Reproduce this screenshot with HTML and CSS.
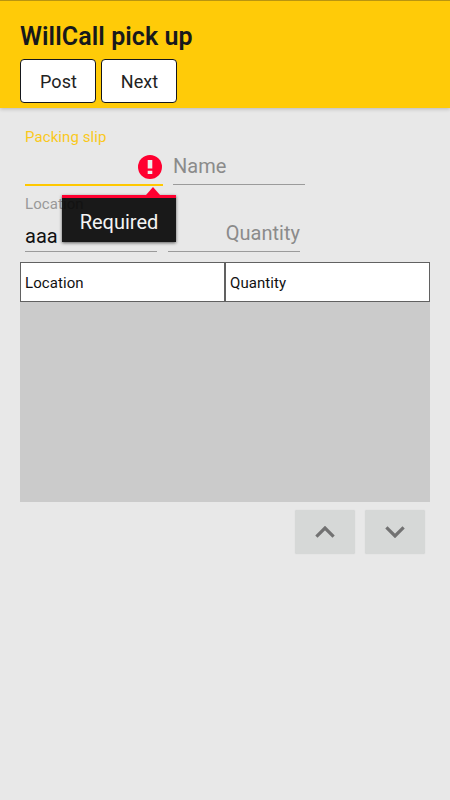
FILE: index.html
```html
<!DOCTYPE html>
<html lang="en">
<head>
<meta charset="utf-8">
<title>WillCall pick up</title>
<link rel="stylesheet" href="styles.css">
</head>
<body>
<header class="bar">
  <h1 class="title">WillCall pick up</h1>
  <div class="actions">
    <button class="action">Post</button>
    <button class="action">Next</button>
  </div>
</header>
<main class="content">
  <div class="row">
    <div class="field slip">
      <label class="label">Packing slip</label>
      <div class="value">
        <svg class="alert" viewBox="0 0 24 24"><circle cx="12" cy="12" r="12" fill="#ff0030"/><path d="M9.700 5h4.600v8.500H9.700zM9.700 15.800h4.600V19H9.700z" fill="#eee"/></svg>
      </div>
      <div class="tooltip"><span class="tip-text">Required</span></div>
    </div>
    <div class="field name">
      <div class="value hint">Name</div>
    </div>
  </div>
  <div class="row second">
    <div class="field location">
      <label class="label">Location</label>
      <div class="value">aaa</div>
    </div>
    <div class="field quantity">
      <div class="value hint">Quantity</div>
    </div>
  </div>
  <section class="list">
    <div class="list-head">
      <div class="cell">Location</div>
      <div class="cell">Quantity</div>
    </div>
  </section>
  <div class="movers">
    <button class="mover" aria-label="Up"><svg width="20" height="12" viewBox="0 0 20 12"><path d="M1.400 10.600 10 2l8.600 8.600"/></svg></button>
    <button class="mover" aria-label="Down"><svg width="20" height="12" viewBox="0 0 20 12"><path d="M1.400 1.400 10 10l8.600-8.600"/></svg></button>
  </div>
</main>
</body>
</html>
```
FILE: styles.css
```css
* { box-sizing: border-box; }
body {
  margin: 0;
  min-height: 800px;
  background: #e8e8e8;
  color: #111;
  font-family: Roboto, "Liberation Sans", sans-serif;
}
button { font-family: inherit; padding: 0; margin: 0; }
.bar {
  height: 108px;
  padding: 21px 20px 0;
  background: #ffcb08;
  border-top: 1px solid #b99510;
  box-shadow: 0 1px 4px rgba(0, 0, 0, .22);
}
.title {
  margin: 0 0 7px;
  font-size: 25px;
  line-height: 30px;
  font-weight: 600;
  letter-spacing: .08px;
  color: #17191c;
}
.actions { display: flex; gap: 5px; }
.action {
  width: 76px;
  height: 44px;
  padding: 1px 0 0 1px;
  border: 1px solid #15171c;
  border-radius: 4px;
  background: #fff;
  color: #222;
  font-size: 18px;
  letter-spacing: .05px;
}
.content { padding: 20px 20px 0; }
.row { display: flex; gap: 10px; height: 58px; padding-left: 5px; }
.second { height: 56px; margin-top: 10px; }
.field {
  position: relative;
  display: flex;
  flex-direction: column;
  justify-content: space-between;
  width: 132px;
  border-bottom: 1px solid #9b9b9b;
}
.row:first-child .name { height: 57px; justify-content: flex-end; }
.slip { width: 138px; border-bottom: 2px solid #ffc800; }
.slip .label { color: #fac91d; }
.slip .value { display: flex; justify-content: flex-end; height: 29px; }
.quantity { justify-content: flex-end; align-items: flex-end; margin-left: 1px; }
.label { font-size: 15px; line-height: 18px; letter-spacing: .08px; color: #999; }
.second .label { margin-top: -1px; }
.value { height: 30px; font-size: 20px; line-height: 24px; letter-spacing: .03px; }
.location .value { height: 27px; }
.alert { width: 24px; height: 24px; margin-right: 1px; }
.hint { color: #8b8b8b; }
.tooltip {
  position: absolute;
  z-index: 2;
  left: 37px;
  top: 67px;
  width: 114px;
  height: 47px;
  padding-top: 12px;
  border-top: 3px solid #ff0030;
  background: rgba(6, 6, 6, .92);
  background-clip: padding-box;
  box-shadow: 0 1px 3px rgba(0, 0, 0, .6);
  color: #f4f4f4;
  font-size: 20px;
  line-height: 24px;
  text-align: center;
}
.tooltip::before {
  content: "";
  position: absolute;
  top: -11px;
  left: 84px;
  border: 7px solid transparent;
  border-top: 0;
  border-bottom: 8px solid #ff0030;
}
.list { height: 240px; margin-top: 10px; background: #cbcbcb; }
.list-head { display: flex; height: 40px; }
.cell {
  flex: 1;
  padding-left: 4px;
  border: 1px solid #616161;
  background: #fff;
  font-size: 15px;
  line-height: 40px;
  letter-spacing: .08px;
}
.movers { display: flex; justify-content: flex-end; gap: 10px; padding: 8px 5px 0; }
.mover {
  display: flex;
  align-items: center;
  justify-content: center;
  width: 60px;
  height: 44px;
  border: 0;
  border-radius: 2px;
  background: #d6d8d7;
  box-shadow: 0 0 1px #ccc;
}
.mover path { fill: none; stroke: #727272; stroke-width: 3.2; }
```
